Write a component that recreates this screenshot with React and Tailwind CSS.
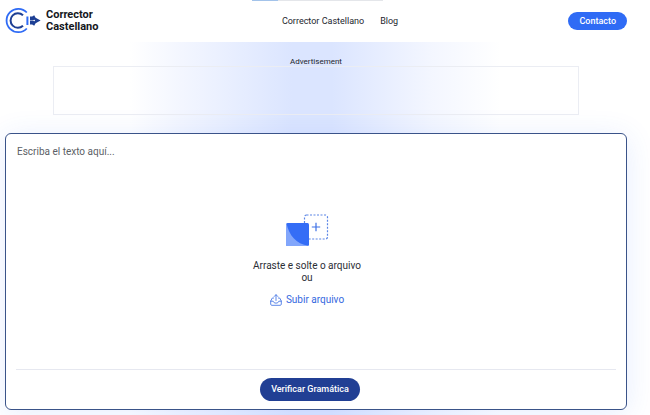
import React, { useRef, useState } from "react";

function Logo() {
  return (
    <a href="/" className="flex items-center gap-[5px] text-[11px] leading-3 font-bold text-[#15171c]">
      <svg viewBox="0 0 36 28" className="h-7 w-9" fill="none" aria-hidden="true">
        <path d="M21.800 5.500A11.700 11.700 0 1 0 21.800 21.500" stroke="#2f6bf5" strokeWidth="1.800" />
        <path d="M18 8.300A7.300 7.300 0 1 0 18 18.700" stroke="#1d3f94" strokeWidth="2" />
        <path d="M21.400 9.500h2v8.500h-2z" fill="#2f6bf5" />
        <path d="M25 9.500h2.200l2-1.200 1.400 2.500 5 2.700-5 2.700-1.400 2.500-2-1.200H25z" fill="#1d3f94" />
        <path d="M25 13.500h4" stroke="#fff" strokeWidth="0.5" />
        <circle cx="29.200" cy="13.500" r="0.8" fill="#fff" />
      </svg>
      <span>
        Corrector
        <br />
        Castellano
      </span>
    </a>
  );
}

function Navbar() {
  return (
    <header className="relative bg-white">
      {/* page loading bar */}
      <div className="absolute top-0 left-[252px] flex h-px w-[131px] bg-[#e4e6ea]">
        <div className="w-[26px] bg-[#a3c3ea]" />
      </div>
      <div className="grid h-[42px] grid-cols-[1fr_auto_1fr] items-center pr-[23px] pl-[5px]">
        <Logo />
        <nav className="flex gap-4 pl-12 text-[9px] leading-3 text-[#23262d]">
          <a href="/">Corrector Castellano</a>
          <a href="/blog">Blog</a>
        </nav>
        <a
          href="/contacto"
          className="justify-self-end rounded-full bg-[#2f6bf5] px-[11px] py-[3px] text-[9px] leading-3 font-medium text-white"
        >
          Contacto
        </a>
      </div>
    </header>
  );
}

function DropIcon() {
  return (
    <svg viewBox="0 0 44 34" className="h-[34px] w-11" fill="none" aria-hidden="true">
      <rect x="19.500" y="1" width="23" height="24" rx="2" stroke="#5c86e6" strokeWidth="1.200" strokeDasharray="2 1.500" />
      <rect x="1" y="9" width="23" height="23" rx="1.500" fill="#346df6" />
      <path d="M1.500 9.500C4 21 11 30 23.500 31.700L22.500 32H2.500A1.500 1.500 0 0 1 1 30.500v-20z" fill="#82a6fb" />
      <path d="M31 8.800v8.400M26.800 13h8.400" stroke="#3d70e6" strokeWidth="1.200" />
    </svg>
  );
}

function UploadIcon() {
  return (
    <svg viewBox="0 0 12 12" className="size-3" fill="none" stroke="#4c7ae6" strokeWidth="0.9" strokeLinecap="round" strokeLinejoin="round" aria-hidden="true">
      <path d="M6 6.500V.8M4.200 2.500L6 .7l1.800 1.800" />
      <path d="M3.600 4H2.300L.7 7v3.200c0 .7.4 1.100 1.100 1.100h8.400c.7 0 1.100-.4 1.100-1.100V7L9.700 4H8.400" />
      <path d="M.7 7.200h2.500c.3 1.300 1.200 1.900 2.800 1.900s2.500-.6 2.800-1.900h2.500" />
    </svg>
  );
}

function Editor() {
  const [text, setText] = useState("");
  const fileRef = useRef(null);

  return (
    <form
      className="flex flex-col rounded-md border border-[#3a5389] bg-white px-2.5 shadow-[0_4px_30px_rgba(47,107,245,0.12)]"
      onSubmit={(e) => e.preventDefault()}
    >
      <textarea
        aria-label="Texto"
        placeholder="Escriba el texto aquí..."
        value={text}
        onChange={(e) => setText(e.target.value)}
        className="mt-3 h-[67px] resize-none bg-transparent pl-px text-[10px] leading-3 outline-none placeholder:text-[#5c5f66]"
      />
      <div className="flex h-[156px] flex-col items-center pt-px pr-[18px] text-[10px] leading-3 text-[#2b2e35]">
        <DropIcon />
        <p className="mt-3 text-center">
          Arraste e solte o arquivo
          <br />
          ou
        </p>
        <button
          type="button"
          onClick={() => fileRef.current.click()}
          className="mt-2.5 flex items-center gap-1 text-[#3468e0]"
        >
          <UploadIcon />
          Subir arquivo
        </button>
        <input ref={fileRef} type="file" aria-label="Subir arquivo" className="hidden" />
      </div>
      <div className="flex justify-center border-t border-[#e6e8f0] py-2 pr-3">
        <button type="submit" className="rounded-full bg-[#213f94] px-[11px] py-[5px] text-[9px] leading-[13px] font-medium text-white">
          Verificar Gramática
        </button>
      </div>
    </form>
  );
}

export default function App() {
  return (
    <div className="min-h-screen overflow-hidden bg-white font-['Roboto',sans-serif]">
      <Navbar />
      <main className="bg-[linear-gradient(90deg,transparent_20%,#f3f6ff_28%,#dbe5ff_45%,#dbe5ff_51%,#f3f6ff_66%,transparent_77%)] pr-[23px] pb-1.5 pl-[5px]">
        <section className="px-12 pt-[15px] pb-[18px] text-center">
          <p className="text-[8px] leading-[9px] text-[#23262d]">Advertisement</p>
          <div className="h-[49px] border border-[#ebedf3]" />
        </section>
        <Editor />
      </main>
    </div>
  );
}
